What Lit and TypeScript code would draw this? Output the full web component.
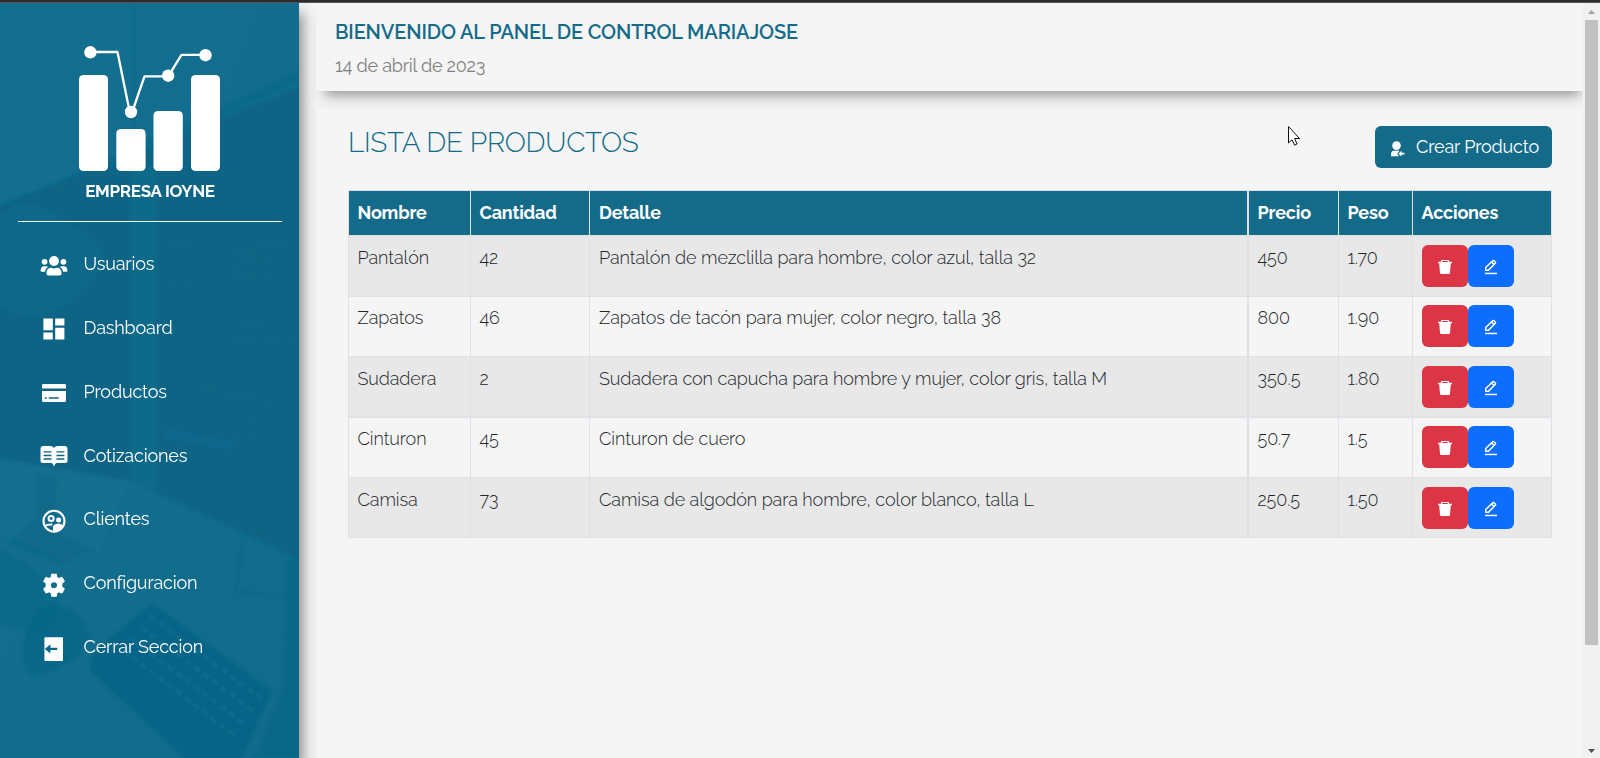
import { LitElement, html, css, svg } from "lit";
import { customElement } from "lit/decorators.js";

interface Product {
  name: string;
  qty: string;
  detail: string;
  price: string;
  weight: string;
}

const products: Product[] = [
  { name: "Pantalón", qty: "42", detail: "Pantalón de mezclilla para hombre, color azul, talla 32", price: "450", weight: "1.70" },
  { name: "Zapatos", qty: "46", detail: "Zapatos de tacón para mujer, color negro, talla 38", price: "800", weight: "1.90" },
  { name: "Sudadera", qty: "2", detail: "Sudadera con capucha para hombre y mujer, color gris, talla M", price: "350.5", weight: "1.80" },
  { name: "Cinturon", qty: "45", detail: "Cinturon de cuero", price: "50.7", weight: "1.5" },
  { name: "Camisa", qty: "73", detail: "Camisa de algodón para hombre, color blanco, talla L", price: "250.5", weight: "1.50" },
];

// All menu glyphs are drawn in a 28x28 box.
const menu = [
  {
    label: "Usuarios",
    icon: svg`<circle cx="14" cy="9" r="4.9"/><circle cx="4.600" cy="9.800" r="2.900"/><circle cx="23.400" cy="9.800" r="2.900"/>
      <path d="M6.400 21.200c0-3.400 2.200-5.400 4.800-5.400q2.800 1.300 5.600 0c2.600 0 4.800 2 4.800 5.400 0 1.300-.8 2.200-2 2.200H8.400c-1.200 0-2-.9-2-2.200z"/>
      <path d="M.6 18.800c0-2.600 1.300-4.600 3.400-4.600h1.800c1 0 1.800.4 2.200 1-1.800 1-2.900 2.600-3.100 4.500H1.700c-.7 0-1.100-.3-1.100-.9zM27.400 18.800c0-2.600-1.300-4.600-3.400-4.600h-1.800c-1 0-1.800.4-2.200 1 1.800 1 2.900 2.600 3.100 4.500h3.200c.7 0 1.100-.3 1.100-.9z"/>`,
  },
  {
    label: "Dashboard",
    icon: svg`<path d="M3.400 3.600h9.400v11.600H3.400zM15.200 3.600h9.200v6.800h-9.200zM3.400 17.600h9.400v6.800H3.400zM15.200 12.800h9.200v11.600h-9.200z"/>`,
  },
  {
    label: "Productos",
    icon: svg`<path fill-rule="evenodd" d="M3.400 5h21.200c.9 0 1.400.6 1.400 1.400V9.600H2V6.400C2 5.600 2.500 5 3.400 5zM2 12h24v9.400c0 .9-.6 1.500-1.400 1.500H3.400c-.8 0-1.400-.6-1.400-1.500zM4.800 18.300v1.500h2v-1.500zM8.800 18.300v1.500h10v-1.500z"/>`,
  },
  {
    label: "Cotizaciones",
    icon: svg`<path fill-rule="evenodd" d="M.5 6.200c0-2 1-3.200 3-3.200H10c2 0 3.300.8 4 2 .7-1.200 2-2 4-2h6.500c2 0 3 1.200 3 3.200v11.600c0 1.300-.8 2.200-2.200 2.200H17c-1.400 0-1.700.6-3 3.600-1.300-3-1.600-3.600-3-3.600H2.700C1.300 20 .5 19.100.5 17.800zM3.600 8.200v1.400h7.900V8.200zM3.600 11.800v1.400h7.900v-1.400zM3.600 15.300v1.400h7.900v-1.400zM16.500 8.200v1.400h7.900V8.200zM16.500 11.800v1.400h7.900v-1.400zM16.500 15.300v1.400h7.900v-1.400z"/>`,
  },
  {
    label: "Clientes",
    icon: svg`<g transform="translate(.2 .4) scale(1.15)"><circle cx="12" cy="12" r="9.100" fill="none" stroke="currentColor" stroke-width="1.800"/>
      <circle cx="9.500" cy="9.700" r="2.200" fill="none" stroke="currentColor" stroke-width="1.800"/><circle cx="16" cy="10.900" r="2.200"/>
      <path d="M11.200 20.800v-3.900c0-1.700 2.700-2.700 4.600-2.700 1.700 0 3.100.6 4.300 1.400-1.200 3.100-4.200 5.400-8.100 5.400z"/>
      <path d="M3.800 16.200Q6.200 14.700 10.600 14.900" fill="none" stroke="currentColor" stroke-width="1.800"/></g>`,
  },
  {
    label: "Configuracion",
    icon: svg`<g transform="translate(.2 .4) scale(1.15)"><path fill-rule="evenodd" stroke="currentColor" stroke-width=".9" stroke-linejoin="round" d="M10 2.400h4l.5 2.800 1.700 1 2.700-1 2 3.400-2.100 1.900v2.900l2.100 1.900-2 3.400-2.700-1-1.700 1-.5 2.900h-4l-.5-2.900-1.700-1-2.700 1-2-3.400 2.100-1.900v-2.900L3.100 8.600l2-3.400 2.700 1 1.700-1zM12 8.900a3.100 3.100 0 1 0 0 6.200a3.100 3.100 0 1 0 0-6.200z"/></g>`,
  },
  {
    label: "Cerrar Seccion",
    icon: svg`<path fill-rule="evenodd" d="M5.400 2.300h16.600q1 0 1 1v21.600q0 1-1 1H5.400q-1 0-1-1V3.300q0-1 1-1zM4.800 13.900l5.600 4.700v-3.600h6.800v-2.200h-6.800V9.200z"/>`,
  },
];

@customElement("side-bar")
class SideBar extends LitElement {
  static styles = css`
    :host { display: flex; flex-direction: column; position: relative; z-index: 2; width: 299px; flex: none; color: #fff; background: #116b8b; box-shadow: 4px 10px 12px rgba(0, 0, 0, .42); }
    .photo { position: absolute; inset: 0; width: 299px; height: 755px; }
    .brand { position: relative; margin: 0 17px 0 18px; height: 219px; border-bottom: 1px solid #fff; display: flex; flex-direction: column; align-items: center; box-sizing: border-box; padding: 42px 1px 0 0; }
    .logo { width: 142px; height: 127px; display: block; }
    .name { font-weight: 700; font-size: 17px; line-height: 20px; margin: 9px 0 0 1px; white-space: nowrap; letter-spacing: -.3px; }
    nav { position: relative; padding-top: 10.700px; }
    .item { display: flex; align-items: center; height: 63.850px; padding-left: 39.500px; gap: 16px; }
    .item svg { width: 28px; height: 28px; fill: currentColor; margin-top: 2px; }
    .label { font-size: 18px; line-height: 24px; font-weight: 400; padding-bottom: 1px; letter-spacing: -.18px; }
  `;
  render() {
    return html`
      <svg class="photo" viewBox="0 0 299 755">
        <defs>
          <filter id="soft"><feGaussianBlur stdDeviation="1.500" /></filter>
          <linearGradient id="desk" x1="0" x2="1" y1="0" y2="1"><stop offset="0" stop-color="#136f90" /><stop offset="1" stop-color="#116b8b" /></linearGradient>
        </defs>
        <rect width="299" height="755" fill="url(#desk)" />
        <g filter="url(#soft)">
          <path d="M-5 204L138 150 304 82V558L145 484 130 478-5 455z" fill="#086384" opacity=".85" />
          <path d="M-5 208L304 66V76L-5 216z" fill="#086384" opacity=".4" />
          <path d="M20 200q30 0 70 34 30 20-10 55-40 45-90 8v-80z" fill="#15708f" opacity=".4" />
          <path d="M130 165h27v320h-27z" fill="#1a7492" opacity=".4" />
          <path d="M132 0h3v140h-3z" fill="#086384" opacity=".35" />
          <path d="M0 455L130 478 100 550 70 560 0 530z" fill="#15708f" opacity=".5" />
          <path d="M35 470l22 4 0 55 40 18-34 14-58-20 30-24z" fill="#0b6485" opacity=".4" />
          <path d="M165 425l70 14-4 8-66-12z" fill="#086c94" opacity=".5" />
          <path d="M0 545q40 20 60 50l-15 40L0 620z" fill="#086384" opacity=".35" />
          <path d="M50 602c20-4 38 20 40 32-5 22-42 40-58 38-16-4-12-60 18-70z" fill="#086384" opacity=".5" />
          <path d="M152 600L272 688 240 760H190L90 668 92 650z" fill="#086384" opacity=".65" />
          <path d="M242 535l-6 60M234 587l52 8" fill="none" stroke="#086384" stroke-width="1.500" opacity=".6" />
          <path d="M286 560l-2 120-30 75h50V545z" fill="#086384" opacity=".35" />
        </g>
        <g stroke="#1a7492" stroke-dasharray="8 3" stroke-width="5" opacity=".35">
          <path d="M150 613l112 83M141 624l112 84M132 636l112 85M123 647l112 86" />
        </g>
        <g stroke="#1a7492" stroke-dasharray="7 3 12 4" stroke-width="1.500" opacity=".3">
          <path d="M170 240l20-3M232 250l60-14M234 262l56-12M234 276l40-6M170 280l22-3M240 325l30-4M236 340l62-2M200 385l84 16M236 412l20 2M222 428l34 6" />
        </g>
      </svg>
      <div class="brand">
        <svg class="logo" viewBox="0 0 142 127">
          <g fill="#fff">
            <rect x="0" y="30" width="29" height="96" rx="4.500" /><rect x="37.300" y="84" width="29.300" height="42" rx="4.500" />
            <rect x="74.500" y="66" width="29.300" height="60" rx="4.500" /><rect x="112" y="30" width="29" height="96" rx="4.500" />
            <circle cx="11.400" cy="7.300" r="6.200" /><circle cx="52" cy="67" r="6.200" /><circle cx="89.200" cy="30.700" r="6.200" /><circle cx="126.500" cy="10.200" r="6.200" />
          </g>
          <path d="M11.400 7H38.500L50.500 66H53.500L65.500 31.300H89.200L102.500 9.800H126.500" fill="none" stroke="#fff" stroke-width="2.300" stroke-linejoin="round" />
        </svg>
        <div class="name">EMPRESA IOYNE</div>
      </div>
      <nav>${menu.map((m) => html`<div class="item"><svg viewBox="0 0 28 28">${m.icon}</svg><span class="label">${m.label}</span></div>`)}</nav>
    `;
  }
}

@customElement("product-table")
class ProductTable extends LitElement {
  static styles = css`
    :host { display: block; border: 1px solid #dee2e6; border-width: 1px 0 0 1px; color: #212529; }
    .row { display: grid; grid-template-columns: 122px 119px 659px 90px 74px 139px; height: 60px; background: #f5f5f5; font-weight: 350; letter-spacing: -.08px; }
    .row > div { border-right: 1px solid #dee2e6; border-bottom: 1px solid #dee2e6; padding: 7px 0 0 8.500px; line-height: 27px; white-space: nowrap; }
    .row > .wide { border-right-width: 2px; padding-left: 9px; }
    .row.odd { background: #e8e8e8; }
    .row.tall { height: 61px; }
    .row.odd > div { padding-top: 8px; }
    .row.odd:last-of-type { height: 60px; }
    .row.thick > div { border-bottom-width: 2px; }
    .row.head { height: 45px; background: #136b89; color: #fff; font-weight: 700; letter-spacing: -.18px; }
    .row.head > div { padding-top: 8px; }
    .row > .actions { display: flex; padding: 8px 0 0 9px; }
    .row.odd > .actions { padding-top: 9px; }
    .btn { width: 46px; height: 42px; border-radius: 6px; display: grid; place-items: center; background: #dc3545; }
    .btn.edit { background: #0d6efd; }
    .btn svg { width: 16px; height: 16px; fill: #fff; margin-top: 2px; }
  `;
  render() {
    return html`
      <div class="row head"><div>Nombre</div><div>Cantidad</div><div class="wide">Detalle</div><div>Precio</div><div>Peso</div><div>Acciones</div></div>
      ${products.map((p, i) => html`
        <div class="row ${i % 2 ? "" : "odd tall"} ${i === 2 ? "thick" : ""}">
          <div>${p.name}</div><div>${p.qty}</div><div class="wide">${p.detail}</div><div>${p.price}</div><div>${p.weight}</div>
          <div class="actions">
            <span class="btn"><svg viewBox="0 0 16 16"><path fill-rule="evenodd" d="M4 2.800V1.800Q4 1 4.800 1H11.200Q12 1 12 1.800V2.800H15V4.200H13.800L13 13.800Q12.900 15 11.700 15H4.300Q3.100 15 3 13.800L2.200 4.200H1V2.800zM5.200 2.100V2.900H10.800V2.100z" /></svg></span>
            <span class="btn edit"><svg viewBox="0 0 16 16"><path fill="none" stroke="#fff" stroke-width="1.500" stroke-linejoin="round" d="M2.700 11.300V8.500L9.700 1.700Q10.300 1.200 10.900 1.700L12.300 3Q12.800 3.700 12.300 4.300L5.500 11.300zM8.500 3L11 5.500" /><path d="M2 13.700h12v1.500H2z" /></svg></span>
          </div>
        </div>`)}
    `;
  }
}

@customElement("app-root")
class AppRoot extends LitElement {
  static styles = css`
    :host { display: flex; flex-direction: column; height: 758px; overflow: hidden; position: relative; background: #f5f5f5; font-family: Raleway, Lato, "Open Sans", sans-serif; font-size: 18px; font-variant-numeric: oldstyle-nums; }
    .edge { height: 2px; flex: none; background: #2d2d2d; border-bottom: 1px solid #555; }
    .body { display: flex; flex: 1; min-height: 0; }
    .main { flex: 1; min-width: 0; overflow: hidden; padding-left: 17px; display: flex; flex-direction: column; gap: 18px; background: #f3f3f3; }
    .welcome { position: relative; height: 88px; flex: none; box-sizing: border-box; padding: 15px 0 0 19px; background: #f5f5f5; box-shadow: 3px 10px 12px -6px rgba(0, 0, 0, .4); }
    .hello { font-size: 20px; line-height: 28px; font-weight: 600; color: #136b89; letter-spacing: -.13px; }
    .date { margin-top: 6px; line-height: 27px; color: #808080; letter-spacing: -.22px; }
    .card { flex: 1; background: #f5f5f5; padding: 17px 31px 0 32px; box-shadow: 0 0 10px rgba(0, 0, 0, .03); }
    .top { display: flex; justify-content: space-between; height: 64px; }
    h1 { margin: 0; font-size: 28px; line-height: 34px; font-weight: 350; color: #136b89; letter-spacing: -.28px; }
    .create { display: flex; align-items: center; box-sizing: border-box; width: 177px; height: 42px; border-radius: 6px; background: #136b89; color: #fff; padding: 0 0 0 15px; gap: 10px; white-space: nowrap; letter-spacing: -.18px; }
    .create svg { width: 16px; height: 16px; fill: #fff; margin-top: 3px; }
    .create span { line-height: 24px; }
    .scroll { width: 17px; flex: none; background: #f1f1f1; display: flex; flex-direction: column; align-items: center; }
    .scroll svg { width: 17px; height: 17px; display: block; flex: none; }
    .thumb { width: 13px; height: 625px; background: #c1c1c1; flex: none; }
    .space { flex: 1; }
    .pointer { position: absolute; z-index: 3; left: 1287px; top: 125px; width: 14px; height: 22px; }
  `;
  render() {
    return html`
      <div class="edge"></div>
      <div class="body">
        <side-bar></side-bar>
        <div class="main">
          <div class="welcome">
            <div class="hello">BIENVENIDO AL PANEL DE CONTROL MARIAJOSE</div>
            <div class="date">14 de abril de 2023</div>
          </div>
          <div class="card">
            <div class="top">
              <h1>LISTA DE PRODUCTOS</h1>
              <div class="create">
                <svg viewBox="0 0 16 16"><circle cx="6.500" cy="4.600" r="4.300" /><path d="M1 15.300V13Q1 10.200 4 9.800H9.500L7.200 12.800 9 15.300zM8.400 12.700L11.500 9.700V11.800H14.500V13.600H11.500V15.600z" /></svg>
                <span>Crear Producto</span>
              </div>
            </div>
            <product-table></product-table>
          </div>
        </div>
        <div class="scroll">
          <svg viewBox="0 0 17 17"><path d="M5 11L8.500 7 12 11z" fill="#a3a3a3" /></svg>
          <div class="thumb"></div>
          <div class="space"></div>
          <svg viewBox="0 0 17 17"><path d="M5 8H12L8.500 12z" fill="#505050" /></svg>
        </div>
      </div>
      <svg class="pointer" viewBox="0 0 14 22"><path d="M1.500 1.500V18L5 14.800 7.600 20.200 10 19 7.600 13.500H12.500z" fill="#fff" stroke="#111" stroke-width="1" /></svg>
    `;
  }
}
